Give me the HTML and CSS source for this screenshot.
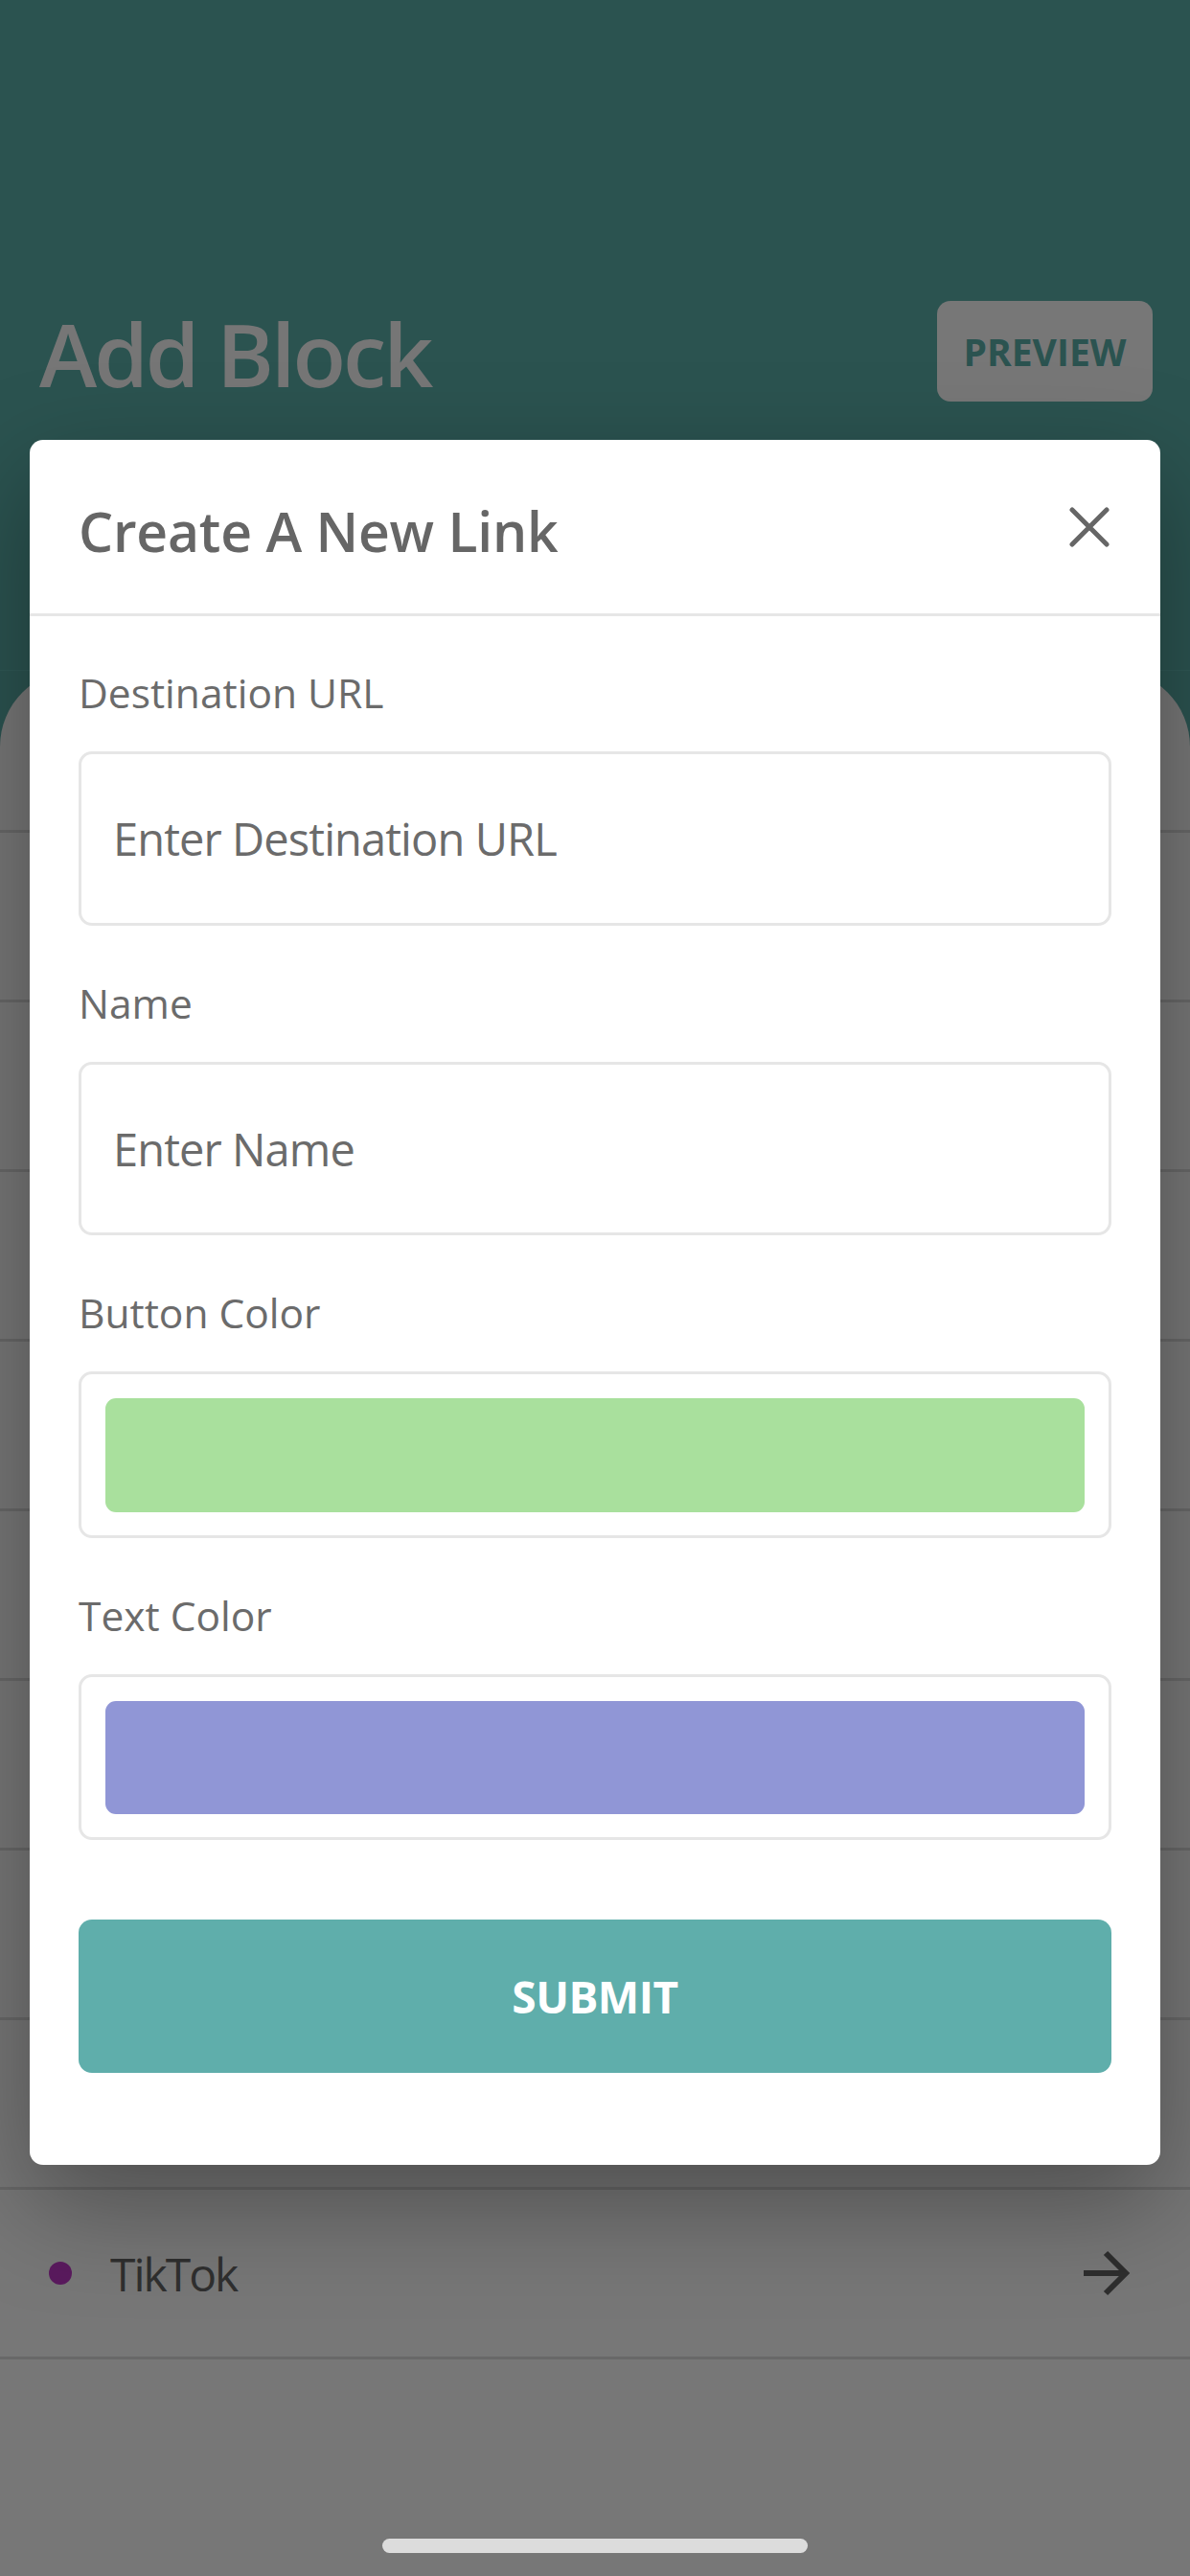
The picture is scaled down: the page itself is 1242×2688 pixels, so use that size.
FILE: index.html
```html
<!DOCTYPE html>
<html lang="en">
<head>
<meta charset="utf-8">
<title>Add Block</title>
<link rel="stylesheet" href="styles.css">
</head>
<body>
<div class="screen">
  <header class="topbar">
    <h1 class="page-title">Add Block</h1>
    <button class="preview-btn" type="button">PREVIEW</button>
  </header>

  <section class="sheet">
    <div class="row row-first"></div>
    <div class="row"></div>
    <div class="row"></div>
    <div class="row"></div>
    <div class="row"></div>
    <div class="row"></div>
    <div class="row"></div>
    <div class="row"></div>
    <div class="row"></div>
    <div class="row">
      <span class="dot"></span>
      <span class="row-label">TikTok</span>
      <svg class="row-arrow" viewBox="0 0 50 50" width="50" height="50" aria-hidden="true">
        <path d="M1 25 H46 M24 4 L45 25 L24 46" fill="none" stroke="#2e2e2e" stroke-width="6" stroke-linejoin="miter" stroke-linecap="butt"/>
      </svg>
    </div>
  </section>

  <div class="modal" role="dialog">
    <div class="modal-header">
      <h2 class="modal-title">Create A New Link</h2>
      <svg class="close-icon" viewBox="0 0 42 42" width="42" height="42" aria-hidden="true">
        <path d="M3 3 L39 39 M39 3 L3 39" fill="none" stroke="#666666" stroke-width="5" stroke-linecap="round"/>
      </svg>
    </div>
    <div class="modal-body">
      <div class="field">
        <label class="field-label">Destination URL</label>
        <div class="text-input"><span class="placeholder">Enter Destination URL</span></div>
      </div>
      <div class="field">
        <label class="field-label">Name</label>
        <div class="text-input text-input-b"><span class="placeholder">Enter Name</span></div>
      </div>
      <div class="field">
        <label class="field-label">Button Color</label>
        <div class="color-field"><div class="swatch swatch-green"></div></div>
      </div>
      <div class="field">
        <label class="field-label">Text Color</label>
        <div class="color-field color-field-b"><div class="swatch swatch-purple"></div></div>
      </div>
      <button class="submit-btn" type="button">SUBMIT</button>
    </div>
  </div>

  <div class="home-indicator"></div>
</div>
</body>
</html>
```

FILE: styles.css
```css
* { box-sizing: border-box; }

html, body {
  margin: 0;
  padding: 0;
}

body {
  width: 1242px;
  height: 2688px;
  overflow: hidden;
  font-family: "Open Sans", "Noto Sans", "Liberation Sans", sans-serif;
}

.screen {
  position: relative;
  width: 1242px;
  height: 2688px;
  overflow: hidden;
  background: #2b5350;
  display: flex;
  flex-direction: column;
}

/* ---------- top bar ---------- */
.topbar {
  height: 700px;
  flex: none;
  padding: 314px 39px 0 41px;
  display: flex;
  align-items: flex-start;
  justify-content: space-between;
  border-bottom: 1px solid #2f5855;
}

.page-title {
  margin: 3px 0 0;
  font-size: 91px;
  line-height: 105px;
  font-weight: 600;
  letter-spacing: -3px;
  color: #767676;
}

.preview-btn {
  width: 225px;
  height: 105px;
  border: none;
  border-radius: 14px;
  background: #777777;
  color: #2b5350;
  font-family: inherit;
  font-size: 39px;
  font-weight: 700;
  padding: 0;
}

/* ---------- list sheet ---------- */
.sheet {
  flex: 1;
  margin-top: -1px;
  background: #777777;
  border-radius: 80px 80px 0 0;
  overflow: hidden;
}

.row {
  height: 177px;
  border-bottom: 3px solid rgba(0, 0, 0, 0.12);
  display: flex;
  align-items: center;
  padding: 0 62px 0 51px;
}

.row-first {
  height: 170px;
}

.dot {
  width: 24px;
  height: 24px;
  border-radius: 50%;
  background: #5a1a5e;
  flex: none;
}

.row-label {
  margin-left: 40px;
  font-size: 48px;
  color: #2f2f2f;
  letter-spacing: -2px;
  flex: 1;
}

.row-arrow {
  flex: none;
}

/* ---------- modal ---------- */
.modal {
  position: absolute;
  left: 31px;
  top: 459px;
  width: 1180px;
  background: #ffffff;
  border-radius: 14px;
  box-shadow: 0 40px 110px rgba(0, 0, 0, 0.34);
}

.modal-header {
  height: 184px;
  border-bottom: 3px solid #e6e6e6;
  display: flex;
  align-items: center;
  justify-content: space-between;
  padding: 0 53px 0 51px;
}

.modal-title {
  margin: 9px 0 0;
  font-size: 57px;
  font-weight: 600;
  letter-spacing: -0.2px;
  color: #666666;
}

.close-icon {
  flex: none;
}

.modal-body {
  padding: 55px 51px 96px;
}

.field + .field {
  margin-top: 56px;
}

.field-label {
  display: block;
  font-size: 42.5px;
  line-height: 50px;
  color: #6b6b6b;
  letter-spacing: 0;
  margin-bottom: 36px;
}

.text-input {
  height: 182px;
  border: 3px solid #e6e6e6;
  border-radius: 14px;
  padding: 0 33px;
  display: flex;
  align-items: center;
}

.text-input-b {
  height: 181px;
}

.placeholder {
  font-size: 47px;
  color: #6b6b6b;
  letter-spacing: -0.9px;
}

.color-field {
  height: 174px;
  border: 3px solid #e6e6e6;
  border-radius: 14px;
  padding: 25px 25px 24px;
}

.color-field-b {
  height: 173px;
}

.swatch {
  height: 100%;
  border-radius: 11px;
}

.swatch-green { background: #a9e09d; }
.swatch-purple { background: #9096d6; }

.submit-btn {
  display: block;
  width: 100%;
  height: 160px;
  margin-top: 83px;
  border: none;
  border-radius: 14px;
  background: #5faeab;
  color: #ffffff;
  font-family: inherit;
  font-size: 46px;
  font-weight: 700;
  letter-spacing: -0.5px;
  padding: 0;
}

/* ---------- home indicator ---------- */
.home-indicator {
  position: absolute;
  left: 399px;
  top: 2649px;
  width: 444px;
  height: 15px;
  border-radius: 8px;
  background: #dcdcdc;
}
```
